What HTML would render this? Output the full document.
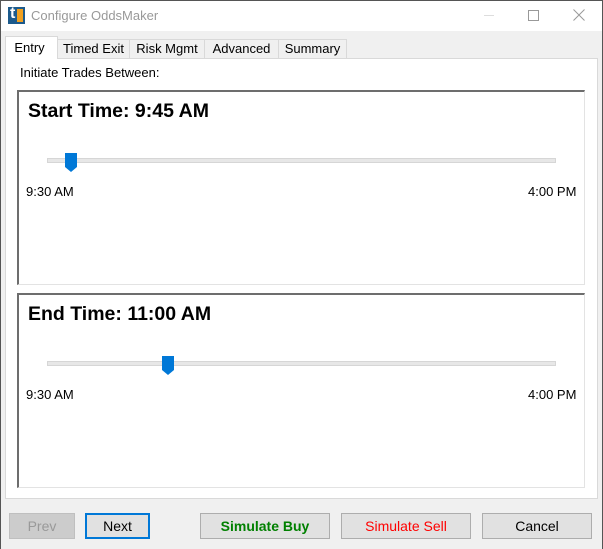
<html><head><style>
body{margin:0;width:603px;height:549px;overflow:hidden;background:#f0f0f0;font-family:"Liberation Sans",sans-serif;position:relative}
.a{position:absolute}
.tab{position:absolute;top:39px;height:19px;border:1px solid #d9d9d9;border-bottom:none;background:#f0f0f0;font-size:13px;text-align:center;line-height:18px;box-sizing:border-box}
.pan{position:absolute;left:17px;width:568px;height:195px;background:#fff;border-top:2px solid #6d6d6d;border-left:2px solid #6d6d6d;border-right:1px solid #e3e3e3;border-bottom:1px solid #e3e3e3;box-sizing:border-box}
.pan h1{position:absolute;left:9px;top:8px;margin:0;font-size:19.5px;font-weight:bold}
.trk{position:absolute;left:28px;top:66px;width:507px;height:3px;background:#e7e7e7;border:1px solid #d6d6d6;box-sizing:content-box}
.lbl{position:absolute;top:92px;font-size:13px}
.btn{position:absolute;top:513px;height:26px;box-sizing:border-box;border:1px solid #adadad;background:#e1e1e1;font-size:14px;text-align:center;line-height:24px}
</style></head><body>
<div class="a" style="left:0;top:0;width:603px;height:31px;background:#fff;border-top:1px solid #555;box-sizing:border-box"></div>
<div class="a" style="left:0;top:0;width:1px;height:549px;background:#555"></div>
<div class="a" style="left:602px;top:0;width:1px;height:549px;background:#555"></div>
<div class="a" style="left:8px;top:7px;width:17px;height:17px;background:#1c5a8c"></div>
<div class="a" style="left:10px;top:5px;font:bold 16px 'Liberation Sans';color:#fff">t</div>
<div class="a" style="left:17px;top:9px;width:6px;height:13px;background:#f0a020"></div>
<div class="a" style="left:31px;top:8px;font-size:13px;color:#999">Configure OddsMaker</div>
<div class="a" style="left:484px;top:15px;width:10px;height:1px;background:#ddd"></div>
<div class="a" style="left:528px;top:10px;width:9px;height:9px;border:1px solid #999"></div>
<svg class="a" style="left:573px;top:9px" width="12" height="12"><path d="M0.5 0.5L11.5 11.5M11.5 0.5L0.5 11.5" stroke="#999" stroke-width="1"/></svg>
<div class="a" style="left:5px;top:58px;width:593px;height:441px;background:#fff;border:1px solid #d9d9d9;box-sizing:border-box"></div>
<div class="tab" style="left:5px;top:36px;width:53px;height:23px;background:#fff;line-height:21px;padding-right:4px;z-index:2">Entry</div>
<div class="tab" style="left:57px;width:73px">Timed Exit</div>
<div class="tab" style="left:129px;width:76px">Risk Mgmt</div>
<div class="tab" style="left:204px;width:75px">Advanced</div>
<div class="tab" style="left:278px;width:69px">Summary</div>
<div class="a" style="left:20px;top:65px;font-size:13px">Initiate Trades Between:</div>
<div class="pan" style="top:90px"><h1>Start Time: 9:45 AM</h1><div class="trk"></div>
<svg class="a" style="left:46px;top:61px" width="13" height="20"><path d="M0 0H12V14L6 19L0 14Z" fill="#0078d7"/></svg>
<div class="lbl" style="left:7px">9:30 AM</div><div class="lbl" style="left:509px">4:00 PM</div></div>
<div class="pan" style="top:293px"><h1>End Time: 11:00 AM</h1><div class="trk"></div>
<svg class="a" style="left:143px;top:61px" width="13" height="20"><path d="M0 0H12V14L6 19L0 14Z" fill="#0078d7"/></svg>
<div class="lbl" style="left:7px">9:30 AM</div><div class="lbl" style="left:509px">4:00 PM</div></div>
<div class="btn" style="left:9px;width:66px;background:#ccc;border-color:#bfbfbf;color:#999">Prev</div>
<div class="btn" style="left:85px;width:65px;border:2px solid #0078d7;line-height:22px">Next</div>
<div class="btn" style="left:200px;width:130px;color:#008000;font-weight:bold">Simulate Buy</div>
<div class="btn" style="left:341px;width:130px;color:#ff0000">Simulate Sell</div>
<div class="btn" style="left:482px;width:110px">Cancel</div>
</body></html>
